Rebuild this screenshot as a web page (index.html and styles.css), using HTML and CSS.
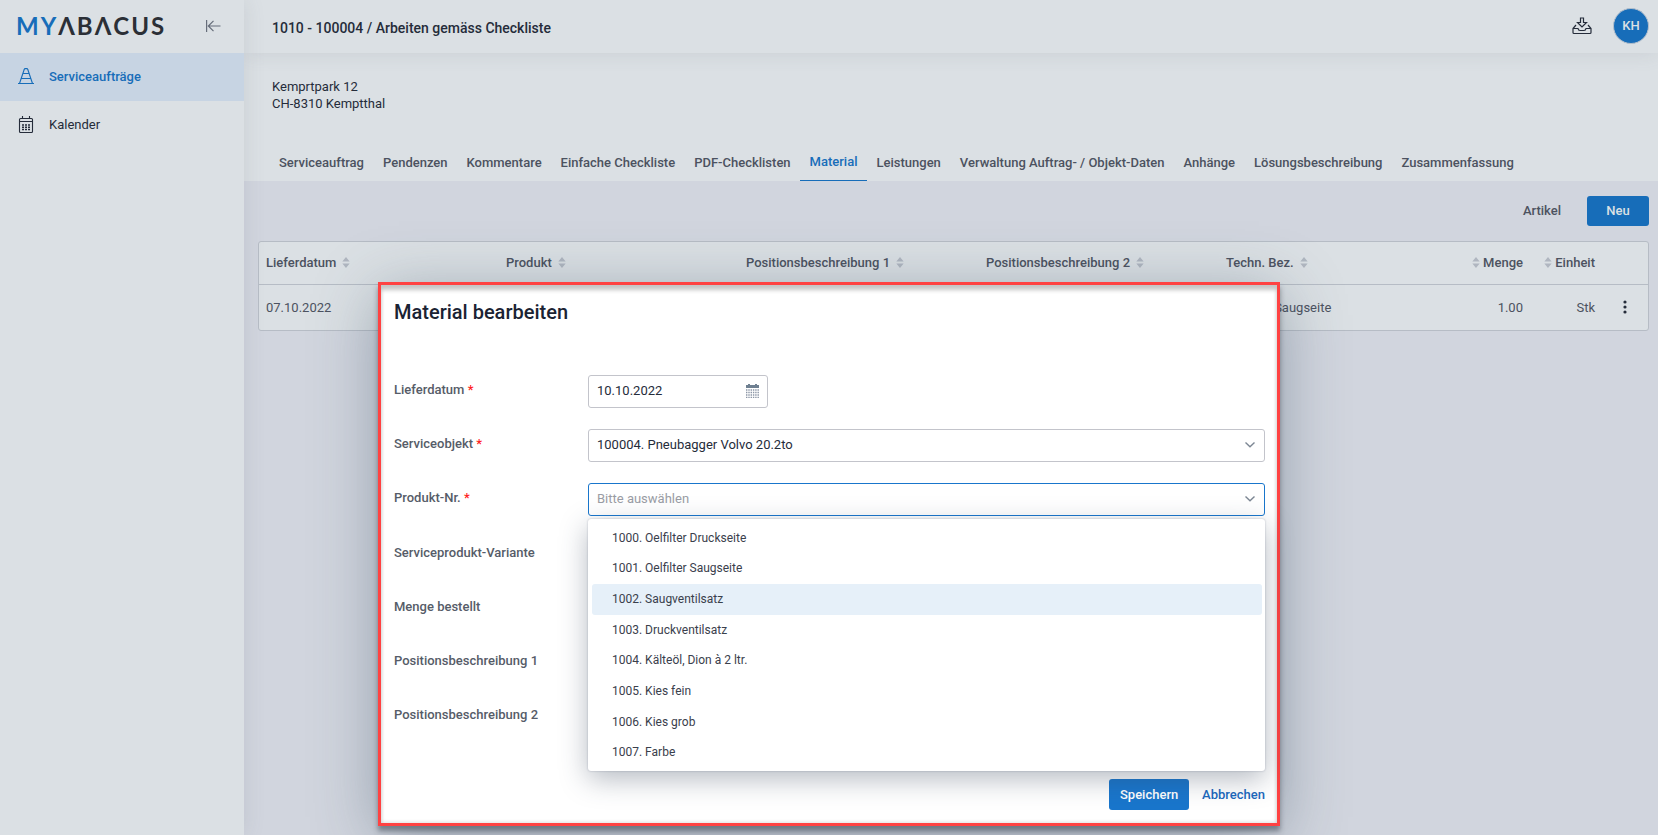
FILE: index.html
```html
<!DOCTYPE html>
<html lang="de">
<head>
<meta charset="utf-8">
<title>MyAbacus – Material bearbeiten</title>
<link rel="stylesheet" href="styles.css">
</head>
<body>
<svg class="symbols" aria-hidden="true">
  <symbol id="sort" viewBox="0 0 8 12"><path d="M4 0 8 5H0zM0 7h8l-4 5z" fill="currentColor"/></symbol>
  <symbol id="chevron" viewBox="0 0 10 6"><path d="M.5.5 5 4.8 9.5.5" fill="none" stroke="currentColor" stroke-width="1.4"/></symbol>
</svg>
<div class="app">
  <aside class="sidebar">
    <div class="brand">
      <span class="logo"><span class="logo-my">MY</span>ΛBΛCUS</span>
      <button class="icon-button collapse" aria-label="Navigation einklappen">
        <svg width="15" height="12" viewBox="0 0 15 12" fill="none" stroke="currentColor" stroke-width="1.200"><path d="M.6 0v12M2.500 6H14.500M7.500.8 2.300 6l5.200 5.200"/></svg>
      </button>
    </div>
    <nav class="nav">
      <a class="nav-item active" href="#">
        <svg width="16" height="16" viewBox="0 0 16 16" fill="none" stroke="currentColor" stroke-width="1.100"><path d="M0 15.500h16M1.500 15.500 6.200 1.500q.2-.9 1.100-.9h1.400q.9 0 1.100.9L14.500 15.500M5 5.500h6M3.300 10.500h9.400"/></svg>
        Serviceaufträge
      </a>
      <a class="nav-item" href="#">
        <svg width="16" height="17" viewBox="0 0 16 17" fill="none" stroke="currentColor" stroke-width="1.100"><rect x="1.500" y="2.500" width="13" height="14" rx="1"/><path d="M4.500 0v3M11.500 0v3M1.500 5.500h13"/><path d="M4 9h2M7 9h2M10 9h2M4 11.250h2M7 11.250h2M10 11.250h2M4 13.500h2M7 13.500h2M10 13.500h2" stroke-width="1.400"/></svg>
        Kalender
      </a>
    </nav>
  </aside>
  <div class="page">
    <header class="topbar">
      <h1>1010 - 100004 / Arbeiten gemäss Checkliste</h1>
      <button class="icon-button" aria-label="Herunterladen">
        <svg width="20" height="18" viewBox="0 0 20 18" fill="none" stroke="currentColor" stroke-width="1.200"><path d="M8.500 1h3v4.500h3L10 10 5.500 5.500h3zM4 8 1 11.500v4q0 1 1 1h16q1 0 1-1v-4L16 8M1 11.500h5q.3 2 2 2h4q1.700 0 2-2h5"/></svg>
      </button>
      <button class="avatar">KH</button>
    </header>
    <section class="intro">
      <address>Kemprtpark 12<br>CH-8310 Kemptthal</address>
      <nav class="tabs">
        <a href="#">Serviceauftrag</a>
        <a href="#">Pendenzen</a>
        <a href="#">Kommentare</a>
        <a href="#">Einfache Checkliste</a>
        <a href="#">PDF-Checklisten</a>
        <a href="#" class="active">Material</a>
        <a href="#">Leistungen</a>
        <a href="#">Verwaltung Auftrag- / Objekt-Daten</a>
        <a href="#">Anhänge</a>
        <a href="#">Lösungsbeschreibung</a>
        <a href="#">Zusammenfassung</a>
      </nav>
    </section>
    <main class="content">
      <div class="actions">
        <button class="plain">Artikel</button>
        <button class="primary new">Neu</button>
      </div>
      <div class="table-card">
        <table>
          <colgroup><col class="wide"><col class="wide"><col class="wide"><col class="wide"><col><col class="narrow"><col class="menu"></colgroup>
          <thead>
            <tr>
              <th>Lieferdatum<svg class="sort"><use href="#sort"/></svg></th>
              <th>Produkt<svg class="sort"><use href="#sort"/></svg></th>
              <th>Positionsbeschreibung 1<svg class="sort"><use href="#sort"/></svg></th>
              <th>Positionsbeschreibung 2<svg class="sort"><use href="#sort"/></svg></th>
              <th><span class="split-row"><span>Techn. Bez.<svg class="sort"><use href="#sort"/></svg></span><span><svg class="sort before"><use href="#sort"/></svg>Menge</span></span></th>
              <th class="right"><svg class="sort before"><use href="#sort"/></svg>Einheit</th>
              <th></th>
            </tr>
          </thead>
          <tbody>
            <tr>
              <td>07.10.2022</td>
              <td></td>
              <td></td>
              <td></td>
              <td><span class="split-row"><span>Oelfilter Saugseite</span><span>1.00</span></span></td>
              <td class="right">Stk</td>
              <td class="menu-cell"><button class="icon-button" aria-label="Weitere Aktionen"><svg width="4" height="14" viewBox="0 0 4 14" fill="currentColor"><circle cx="2" cy="2" r="1.600"/><circle cx="2" cy="7" r="1.600"/><circle cx="2" cy="12" r="1.600"/></svg></button></td>
            </tr>
          </tbody>
        </table>
      </div>
    </main>
  </div>
</div>
<div class="overlay">
  <form class="dialog" role="dialog" aria-labelledby="dialog-title">
    <h2 id="dialog-title">Material bearbeiten</h2>
    <div class="fields">
      <label for="date">Lieferdatum <span class="required">*</span></label>
      <div class="control date">
        <input id="date" type="text" value="10.10.2022">
        <svg class="calendar" width="13" height="14" viewBox="0 0 13 14"><path d="M0 1h2V0h2v1h5V0h2v1h2v3H0z" fill="#6f8091"/><path d="M0 6h13M0 8.500h13M0 11h13M0 13.500h13" stroke="#8b95a5" stroke-width="1.500" stroke-dasharray="1.400 .9"/></svg>
      </div>
      <label for="object">Serviceobjekt <span class="required">*</span></label>
      <div class="control">
        <select id="object"><option>100004. Pneubagger Volvo 20.2to</option></select>
        <svg class="chevron"><use href="#chevron"/></svg>
      </div>
      <label for="product">Produkt-Nr. <span class="required">*</span></label>
      <div class="control open">
        <select id="product"><option>Bitte auswählen</option></select>
        <svg class="chevron"><use href="#chevron"/></svg>
        <ul class="options" role="listbox" aria-label="Produkt-Nr.">
          <li role="option">1000. Oelfilter Druckseite</li>
          <li role="option">1001. Oelfilter Saugseite</li>
          <li role="option" class="hover" aria-selected="true">1002. Saugventilsatz</li>
          <li role="option">1003. Druckventilsatz</li>
          <li role="option">1004. Kälteöl, Dion à 2 ltr.</li>
          <li role="option">1005. Kies fein</li>
          <li role="option">1006. Kies grob</li>
          <li role="option">1007. Farbe</li>
        </ul>
      </div>
      <span class="label">Serviceprodukt-Variante</span><span></span>
      <span class="label">Menge bestellt</span><span></span>
      <span class="label">Positionsbeschreibung 1</span><span></span>
      <span class="label">Positionsbeschreibung 2</span><span></span>
    </div>
    <footer>
      <button type="button" class="primary save">Speichern</button>
      <button type="button" class="cancel">Abbrechen</button>
    </footer>
  </form>
</div>
</body>
</html>
```

FILE: styles.css
```css
* { box-sizing: border-box; }
body {
  margin: 0;
  background: #d1d5de;
  color: #252c3a;
  font: 13px/17px Roboto, "Liberation Sans", sans-serif;
}
h1, h2, ul { margin: 0; padding: 0; }
a { color: inherit; text-decoration: none; }
button, input, select { font: inherit; color: inherit; }
button { border: 0; padding: 0; background: none; cursor: pointer; }
svg { flex: none; }
.symbols { position: absolute; width: 0; height: 0; }

.app { display: flex; min-height: 100vh; }
.sidebar {
  flex: none;
  width: 244px;
  background: #dbe0e4;
  box-shadow: 0 0 20px rgba(90, 100, 115, .14);
  z-index: 2;
}
.brand {
  display: flex;
  align-items: center;
  justify-content: space-between;
  height: 53px;
  padding: 0 23px 2px 16px;
}
.logo {
  font: 700 24px/30px Lato, sans-serif;
  letter-spacing: 2px;
  color: #2b2f36;
}
.logo-my { color: #176db9; }
.icon-button { display: flex; color: #252c3a; }
.collapse { color: #666d7a; }
.nav-item {
  display: flex;
  align-items: center;
  gap: 15px;
  height: 48px;
  padding: 0 18px 2px;
}
.nav-item.active { background: #c7d4e3; color: #176db9; font-weight: 500; }

.page { flex: 1; min-width: 0; }
.topbar {
  position: relative;
  display: flex;
  align-items: center;
  height: 53px;
  padding: 0 9px 2px 28px;
  background: #dbe0e4;
  box-shadow: 0 0 20px rgba(90, 100, 115, .14);
}
.topbar h1 { flex: 1; font-size: 14px; line-height: 20px; font-weight: 500; padding-top: 5px; }
.avatar {
  width: 36px;
  height: 36px;
  margin-left: 21px;
  border: 1px solid #b4bfcc;
  border-radius: 50%;
  background: #176db9;
  color: #dbe0e4;
  font-weight: 500;
}
.intro { padding: 25px 24px 0; background: #dbe0e4; }
address { padding: 0 4px; font-style: normal; }
.tabs { display: flex; margin-top: 31px; padding-left: 1px; }
.tabs a {
  height: 38px;
  padding: 11px 9px 0 10px;
  color: #4c5260;
  font-weight: 500;
  white-space: nowrap;
}
.tabs .active { padding-top: 10px; border-bottom: 1px solid #176db9; color: #176db9; }
.content { padding: 15px 9px 0 14px; }
.actions { display: flex; justify-content: flex-end; gap: 26px; }
.plain { padding-bottom: 2px; color: #4c5260; font-weight: 500; }
.primary { padding-bottom: 1px; border-radius: 3px; background: #176db9; color: #dbe0e4; font-weight: 500; }
.new { width: 62px; height: 30px; }

.table-card { margin-top: 15px; border: 1px solid #b6bcc5; border-radius: 3px; background: #dbe0e4; }
table { width: 100%; border-collapse: collapse; table-layout: fixed; }
.wide { width: 240px; }
.narrow { width: 72px; }
.menu { width: 45px; }
th, td { padding: 0 8px 0 7px; text-align: left; white-space: nowrap; color: #4c5260; }
th { height: 42px; padding-bottom: 1px; border-bottom: 1px solid #b6bcc5; font-weight: 500; }
td { height: 46px; }
.right { text-align: right; }
.split-row { display: flex; justify-content: space-between; }
.sort { width: 8px; height: 11px; margin-left: 6px; vertical-align: -1px; color: #b0b6c0; }
.sort.before { margin: 0 3px 0 0; }
.menu-cell { padding: 0 0 0 20px; }

.overlay {
  position: absolute;
  inset: 0;
  z-index: 5;
  display: flex;
  align-items: flex-start;
  justify-content: center;
  padding-top: 282px;
  overflow: hidden;
}
.dialog {
  position: relative;
  width: min(902px, 100%);
  padding: 17px 12px 13px 13px;
  border: 3px solid #ff4242;
  background: #fff;
  box-shadow:
    0 5px 5px rgba(40, 48, 60, .45),
    0 12px 60px rgba(60, 80, 100, .42),
    inset 0 6px 4px -1px #c6c6c6,
    inset 0 0 4px #d0d0d0;
}
.dialog h2 { font-size: 20px; line-height: 20px; font-weight: 500; color: #1b2333; }
.fields {
  display: grid;
  grid-template-columns: 194px 1fr;
  grid-auto-rows: 33px;
  row-gap: 21px;
  margin-top: 53px;
}
.fields label { padding-top: 6px; color: #565c68; font-weight: 500; }
.label { padding-top: 7px; color: #565c68; font-weight: 500; }
.required { color: #ff2222; }
.control { position: relative; }
.control.date { width: 180px; }
.control input, .control select {
  width: 100%;
  height: 33px;
  padding: 0 8px 2px;
  border: 1px solid #c3c4cb;
  border-radius: 3px;
  outline: 0;
  background: #fff;
  appearance: none;
}
.control.open > select { border-color: #1976cc; color: #9a9da5; }
.calendar { position: absolute; top: 9px; right: 9px; }
.chevron { position: absolute; top: 13px; right: 10px; width: 10px; height: 6px; color: #7d8794; }
.options {
  position: absolute;
  top: 36px;
  left: 0;
  right: 0;
  z-index: 1;
  display: grid;
  grid-template-rows: repeat(8, 1fr);
  height: 252px;
  padding: 4px 3px 3px 4px;
  border-radius: 3px;
  background: #fff;
  box-shadow: 0 0 2px rgba(50, 60, 90, .35), 0 8px 28px rgba(50, 65, 85, .36);
  list-style: none;
}
.options li { display: flex; align-items: center; padding: 0 20px; border-radius: 3px; color: #3a404c; font-size: 12px; }
.options .hover { background: #e6f0f9; }
footer { display: flex; align-items: center; justify-content: flex-end; gap: 13px; margin-top: 47px; }
.save { width: 80px; height: 31px; background: #1976cc; color: #fff; }
.cancel { color: #1b68bd; font-weight: 500; }
```
